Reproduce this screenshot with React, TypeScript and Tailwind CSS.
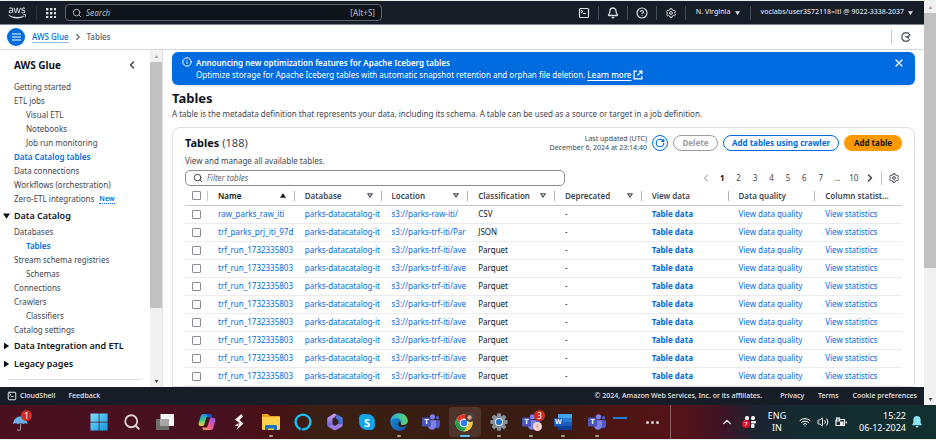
import React from "react";
import { FaAws } from "react-icons/fa";
import {
  Bell,
  CircleHelp,
  Search,
  ChevronLeft,
  ChevronRight,
  ChevronUp,
  X,
  Info,
  RotateCw,
  SquareTerminal,
  Wifi,
  Volume2,
} from "lucide-react";

type NavItem = { label: string; nested?: boolean; active?: boolean; isNew?: boolean };

const topLinks: NavItem[] = [
  { label: "Getting started" },
  { label: "ETL jobs" },
  { label: "Visual ETL", nested: true },
  { label: "Notebooks", nested: true },
  { label: "Job run monitoring", nested: true },
  { label: "Data Catalog tables", active: true },
  { label: "Data connections" },
  { label: "Workflows (orchestration)" },
  { label: "Zero-ETL integrations", isNew: true },
];

const catalogLinks: NavItem[] = [
  { label: "Databases" },
  { label: "Tables", nested: true, active: true },
  { label: "Stream schema registries" },
  { label: "Schemas", nested: true },
  { label: "Connections" },
  { label: "Crawlers" },
  { label: "Classifiers", nested: true },
  { label: "Catalog settings" },
];

const run = { name: "trf_run_1732335803", location: "s3://parks-trf-iti/ave", format: "Parquet" };
const tables = [
  { name: "raw_parks_raw_iti", location: "s3://parks-raw-iti/", format: "CSV" },
  { name: "trf_parks_prj_iti_97d", location: "s3://parks-trf-iti/Par", format: "JSON" },
  run, run, run, run, run, run, run, run,
];

const columns = [
  { label: "Name", sort: "up" },
  { label: "Database", sort: "down" },
  { label: "Location", sort: "down" },
  { label: "Classification", sort: "down" },
  { label: "Deprecated", sort: "down" },
  { label: "View data" },
  { label: "Data quality" },
  { label: "Column statist..." },
];

function Caret({ className, up = false }: { className: string; up?: boolean }) {
  return (
    <svg viewBox="0 0 8 6" className={className} fill="currentColor" aria-hidden="true">
      <path d={up ? "M4 0 8 6H0Z" : "M0 0h8L4 6Z"} />
    </svg>
  );
}

function Cog({ className }: { className: string }) {
  return (
    <svg viewBox="0 0 20 20" className={className} fill="none" stroke="currentColor" strokeWidth="2" strokeLinejoin="round" aria-hidden="true">
      <path d="M8 1.500h4l.700 2.500 1.800 1 2.500-.7 2 3.400L17.200 9.500v1L19 12.300l-2 3.400-2.500-.7-1.800 1-.700 2.500H8L7.300 16l-1.800-1-2.500.7-2-3.400 1.800-1.800v-1L1 7.700l2-3.400 2.500.7 1.800-1Z" />
      <circle cx="10" cy="10" r="2.800" />
    </svg>
  );
}

function ExternalIcon() {
  return (
    <svg viewBox="0 0 18 18" className="size-2.5" fill="none" stroke="currentColor" strokeWidth="2.200" aria-hidden="true">
      <path d="M7 2H2v14h14v-5M10.500 2H16v5.500M16 2 8 10" />
    </svg>
  );
}

function Divider({ className = "bg-[#414d5c]" }: { className?: string }) {
  return <span className={`h-3.5 w-px shrink-0 ${className}`} />;
}

function TopBar() {
  return (
    <header className="flex h-6 shrink-0 items-center border-b border-[#7d8590] bg-[#161d26] pl-2 text-[7px] font-medium text-[#dcdfe4]">
      <a href="#home" aria-label="AWS home"><FaAws className="h-4 w-[18px]" /></a>
      <span className="w-2.5" />
      <Divider className="bg-[#2a333f]" />
      <button aria-label="Services" className="ml-[9px]">
        <svg viewBox="0 0 10 10" className="size-2.5" fill="currentColor">
          {[0, 4, 8].map((y) => [0, 4, 8].map((x) => <rect key={`${x}-${y}`} x={x} y={y} width="2.4" height="2.4" />))}
        </svg>
      </button>
      <label className="ml-[9px] flex h-[17px] w-[317px] items-center rounded border border-[#5c6570] bg-[#0f141a] px-1.5">
        <Search className="size-2.5 text-[#c6c9ce]" />
        <input aria-label="Search" placeholder="Search" className="ml-1 min-w-0 flex-1 bg-transparent text-[8px] italic outline-none placeholder:text-[#a4abb3]" />
        <span className="text-[8px] text-[#a4abb3]">[Alt+S]</span>
      </label>
      <div className="ml-auto flex items-center gap-2 pr-[11px]">
        <button aria-label="CloudShell"><SquareTerminal className="size-3" strokeWidth={2.4} /></button>
        <Divider />
        <button aria-label="Notifications"><Bell className="size-3" strokeWidth={2.6} /></button>
        <Divider />
        <button aria-label="Help"><CircleHelp className="size-3" strokeWidth={2.4} /></button>
        <Divider />
        <button aria-label="Settings" className="px-px"><Cog className="size-2.5" /></button>
        <Divider />
        <button className="flex items-center gap-1 px-0.5">N. Virginia<Caret className="h-1 w-[5px]" /></button>
        <Divider />
        <button className="flex items-center gap-1 pl-0.5">voclabs/user3572118=iti @ 9022-3338-2037<Caret className="h-1 w-[5px]" /></button>
      </div>
    </header>
  );
}

function Breadcrumbs() {
  return (
    <nav aria-label="Breadcrumb" className="flex h-[25px] shrink-0 items-center border-b border-[#d5d7da] bg-white pr-[13px] pl-[7px] text-[8px] font-medium">
      <button aria-label="Open navigation" className="flex size-[18px] items-center justify-center rounded-full bg-[#006ce0] text-white">
        <svg viewBox="0 0 9 8" className="h-2 w-[9px]" stroke="currentColor" strokeWidth="1"><path d="M0 1h9M0 4h9M0 7h9" /></svg>
      </button>
      <a href="#glue" className="ml-[7px] border-b border-[#8fbdf0] leading-[10px] text-[#006ce0]">AWS Glue</a>
      <ChevronRight className="mx-1 size-2.5 text-[#656871]" strokeWidth={3} />
      <span className="text-[#5c606a]">Tables</span>
      <span className="ml-auto" />
      <Divider className="bg-[#c6c6cd]" />
      <button aria-label="Regional settings" className="ml-[9px] text-[#424650]">
        <svg viewBox="0 0 20 20" className="size-2.5" fill="none" stroke="currentColor" strokeWidth="2.200">
          <path d="M17.800 9V6L14 1.800H6L2 6v8l4 4.200h8l3.800-4.200" />
          <path d="M7.500 9.500h4.500l3-2.500v6l-3-2" fill="currentColor" strokeWidth="1.500" />
        </svg>
      </button>
    </nav>
  );
}

function NavList({ items }: { items: NavItem[] }) {
  return (
    <ul>
      {items.map((item) => (
        <li key={item.label} className={`flex h-3.5 items-center gap-[5px] ${item.nested ? "pl-[26px]" : "pl-3.5"}`}>
          <a href="#nav" className={item.active ? "font-semibold text-[#006ce0]" : "text-[#424650]"}>{item.label}</a>
          {item.isNew && <span className="border-b border-dotted border-[#006ce0] text-[7px] leading-[9px] font-semibold text-[#006ce0]">New</span>}
        </li>
      ))}
    </ul>
  );
}

function NavSection({ label, open = false }: { label: string; open?: boolean }) {
  return (
    <button className="flex h-[18px] w-full items-center text-[9px] font-semibold text-[#0f141a]">
      <span className="flex w-3.5 pl-[3px]"><Caret className={open ? "h-[6px] w-[7px]" : "h-[6px] w-[7px] -rotate-90"} /></span>
      {label}
    </button>
  );
}

function ScrollRail({ className, thumb }: { className: string; thumb: string }) {
  return (
    <div className={`flex shrink-0 flex-col items-center bg-[#f1f1f1] ${className}`} aria-hidden="true">
      <span className="flex h-3 items-center text-[#a3a3a3]"><Caret up className="h-[3px] w-[5px]" /></span>
      <span className={`w-full bg-[#c1c1c1] ${thumb}`} />
      <span className="flex-1" />
      <span className="flex h-3 items-center text-[#505050]"><Caret className="h-[3px] w-[5px]" /></span>
    </div>
  );
}

function Sidebar() {
  return (
    <aside className="flex w-[163px] shrink-0 border-r border-[#dedee3] bg-white">
      <div className="min-w-0 flex-1">
        <div className="flex h-[30px] items-center justify-between pr-3 pl-3.5">
          <h2 className="text-[10px] font-bold text-[#0f141a]">AWS Glue</h2>
          <button aria-label="Close navigation"><ChevronLeft className="size-3 text-[#424650]" strokeWidth={3} /></button>
        </div>
        <nav aria-label="AWS Glue" className="flex flex-col gap-px leading-[14px]">
          <NavList items={topLinks} />
          <div>
            <NavSection label="Data Catalog" open />
            <NavList items={catalogLinks} />
            <NavSection label="Data Integration and ETL" />
            <NavSection label="Legacy pages" />
          </div>
        </nav>
        <hr className="mx-2 mt-1.5 border-[#dedee3]" />
      </div>
      <ScrollRail className="w-3" thumb="h-[73%]" />
    </aside>
  );
}

function Banner() {
  return (
    <section className="flex h-[33px] items-start gap-1 rounded-md bg-[#006ce0] px-2.5 pt-[5px] text-white shadow-sm">
      <Info className="size-2.5" strokeWidth={2.4} />
      <div className="min-w-0 flex-1 leading-[12px]">
        <p className="font-semibold">Announcing new optimization features for Apache Iceberg tables</p>
        <p className="flex items-center">
          Optimize storage for Apache Iceberg tables with automatic snapshot retention and orphan file deletion.
          <a href="#more" className="ml-0.5 flex items-center gap-0.5 font-medium underline underline-offset-2">Learn more <ExternalIcon /></a>
        </p>
      </div>
      <button aria-label="Dismiss"><X className="size-3" strokeWidth={2.4} /></button>
    </section>
  );
}

function Pagination() {
  return (
    <nav aria-label="Pages" className="flex items-center text-[8px] text-[#424650]">
      <button aria-label="Previous page" className="flex w-4 justify-center"><ChevronLeft className="size-3 text-[#8c8c94]" /></button>
      <div className="flex w-[148px]">
        {["1", "2", "3", "4", "5", "6", "7", "...", "10"].map((page) => (
          <button key={page} className={`flex-1 basis-0 text-center ${page === "1" ? "font-bold text-[#0f141a]" : ""}`}>{page}</button>
        ))}
      </div>
      <button aria-label="Next page" className="flex w-4 justify-center"><ChevronRight className="size-3" strokeWidth={3} /></button>
      <span className="w-[3px]" />
      <Divider className="bg-[#c6c6cd]" />
      <button aria-label="Preferences" className="ml-[7px] pr-[3px]"><Cog className="size-2.5" /></button>
    </nav>
  );
}

const box = "block size-[9px] appearance-none rounded-[1px] border border-[#8c8c94] bg-white checked:bg-[#006ce0]";

function TablesGrid() {
  return (
    <table className="w-full table-fixed border-collapse text-left leading-[12px]">
      <thead>
        <tr className="h-[18px] border-b border-[#c6c6cd] text-[#424650]">
          <th className="w-[23px] pl-[7px]">
            <div className="flex items-center justify-between">
              <input type="checkbox" aria-label="Select all tables" className={box} />
              <span className="h-2.5 w-px bg-[#c6c6cd]" />
            </div>
          </th>
          {columns.map((column, i) => (
            <th key={column.label} className="pl-2.5 font-semibold">
              <div className={i === 0 ? "flex items-center text-[#0f141a]" : "flex items-center"}>
                <span className="flex-1 truncate">{column.label}</span>
                {column.sort === "up" && <Caret up className="mr-2 h-[5px] w-1.5" />}
                {column.sort === "down" && (
                  <svg viewBox="0 0 8 7" className="mr-2 h-[5px] w-1.5" fill="none" stroke="currentColor" strokeWidth="1.5"><path d="M1 1h6L4 5.5Z" /></svg>
                )}
                {i < columns.length - 1 && <span className="h-2.5 w-px bg-[#b4b4bb]" />}
              </div>
            </th>
          ))}
        </tr>
      </thead>
      <tbody className="[&_td]:overflow-hidden [&_td]:pl-2.5 [&_td]:whitespace-nowrap">
        {tables.map((table, i) => (
          <tr key={i} className="h-[18px] border-b border-[#ebebf0] text-[#006ce0]">
            <th className="pl-[7px]"><input type="checkbox" aria-label={`Select ${table.name}`} className={box} /></th>
            <td><a href="#table">{table.name}</a></td>
            <td><a href="#database">parks-datacatalog-it</a></td>
            <td><a href="#location">{table.location}</a></td>
            <td className="text-[#0f141a]">{table.format}</td>
            <td className="text-[#0f141a]">-</td>
            <td><a href="#data" className="font-bold">Table data</a></td>
            <td><a href="#quality">View data quality</a></td>
            <td><a href="#statistics">View statistics</a></td>
          </tr>
        ))}
      </tbody>
    </table>
  );
}

function TablesPage() {
  return (
    <main className="min-w-0 flex-1 overflow-hidden bg-white px-[9px] pt-0.5 text-[#424650]">
      <Banner />
      <h1 className="mt-[5px] text-[13px] leading-[17px] font-bold text-[#0f141a]">Tables</h1>
      <p className="leading-[14px]">A table is the metadata definition that represents your data, including its schema. A table can be used as a source or target in a job definition.</p>
      <section className="mt-1.5 rounded-t-lg border border-[#dedee3] px-3 pt-1.5">
        <div className="flex items-center gap-[5px]">
          <h2 className="flex-1 text-[11px] leading-[18px] font-bold text-[#0f141a]">Tables <span className="font-normal text-[#424650]">(188)</span></h2>
          <p className="text-right text-[7px] leading-[9px]">Last updated (UTC)<br />December 6, 2024 at 23:14:40</p>
          <button aria-label="Refresh" className="flex size-4 items-center justify-center rounded-full border border-[#006ce0] text-[#006ce0]"><RotateCw className="size-2.5" strokeWidth={2.8} /></button>
          <button className="h-4 w-[45px] rounded-full border border-[#9b9ba5] font-bold text-[#9b9ba5]">Delete</button>
          <button className="h-4 w-[116px] rounded-full border border-[#006ce0] font-bold text-[#006ce0]">Add tables using crawler</button>
          <button className="h-4 w-[58px] rounded-full bg-[#ff9900] font-bold text-[#0f141a]">Add table</button>
        </div>
        <p className="mt-[3px] leading-[12px]">View and manage all available tables.</p>
        <div className="mt-[3px] flex items-center justify-between">
          <label className="flex h-4 w-[380px] items-center rounded-[5px] border border-[#8c8c94] px-[7px]">
            <Search className="size-2.5" strokeWidth={2.4} />
            <input aria-label="Filter tables" placeholder="Filter tables" className="ml-1 min-w-0 flex-1 italic outline-none placeholder:text-[#656871]" />
          </label>
          <Pagination />
        </div>
        <div className="pt-px"><TablesGrid /></div>
      </section>
    </main>
  );
}

function Footer() {
  return (
    <footer className="flex h-[18px] shrink-0 items-center bg-[#161d26] px-[7px] text-[7px] font-medium text-[#e6e8eb]">
      <button className="flex items-center gap-[3px]"><SquareTerminal className="size-2.5" strokeWidth={2.4} />CloudShell</button>
      <button className="ml-[13px]">Feedback</button>
      <p className="ml-auto">© 2024, Amazon Web Services, Inc. or its affiliates.</p>
      <a href="#privacy" className="ml-[18px]">Privacy</a>
      <a href="#terms" className="ml-3.5">Terms</a>
      <a href="#cookies" className="ml-3.5">Cookie preferences</a>
    </footer>
  );
}

function WindowsIcon() {
  return (
    <svg viewBox="0 0 18 18" className="size-[18px]">
      <defs><linearGradient id="win" x1="0" y1="0" x2="1" y2="1"><stop stopColor="#7fe0fb" /><stop offset="1" stopColor="#0f95e4" /></linearGradient></defs>
      <path fill="url(#win)" d="M.5.5h8.2v8.2H.5ZM9.4.5h8.2v8.2H9.4ZM.5 9.4h8.2v8.2H.5ZM9.4 9.4h8.2v8.2H9.4Z" />
    </svg>
  );
}

function TaskViewIcon() {
  return (
    <svg viewBox="0 0 18 18" className="size-[18px]">
      <path fill="#6f6f70" d="M0 6h13v11H0Z" />
      <path fill="#f4f4f4" d="M4.500 1H18v12H4.500Z" />
      <path fill="#a9a5a6" d="M4.500 6H13v7H4.500Z" />
    </svg>
  );
}

function CopilotIcon() {
  return (
    <svg viewBox="0 0 18 18" className="size-[18px]">
      <defs>
        <linearGradient id="copA" x1="0" y1="0" x2="0" y2="1"><stop stopColor="#1c8cf0" /><stop offset=".5" stopColor="#3cc78a" /><stop offset="1" stopColor="#f4d33b" /></linearGradient>
        <linearGradient id="copB" x1="1" y1="0" x2="0" y2="1"><stop stopColor="#8b5cf0" /><stop offset=".5" stopColor="#e8569f" /><stop offset="1" stopColor="#fba24a" /></linearGradient>
      </defs>
      <path fill="url(#copA)" d="M5 1h6.500c1.500 0 2 1 2.300 2.500H10c-1 0-1.500.7-1.800 1.800L6.500 11c-.4 1.300-1 2-2.300 2H2.500C.8 13 .2 11.800.7 10L2.600 3.500C3 2 3.600 1 5 1Z" />
      <path fill="#1652c4" d="M8.500 1h3c1.600 0 2.100 1 2.500 2.600L14.400 5H11Z" />
      <path fill="url(#copB)" d="M13 17H6.500c-1.500 0-2-1-2.300-2.500H8c1 0 1.500-.7 1.800-1.800L11.500 7c.4-1.300 1-2 2.300-2h1.700c1.700 0 2.300 1.200 1.800 3l-1.900 6.500c-.4 1.500-1 2.500-2.400 2.500Z" />
    </svg>
  );
}

function BoltIcon() {
  return (
    <svg viewBox="0 0 12 18" className="h-[18px] w-3">
      <path fill="#f5f0f0" d="M8.500 1 2 6.500l4.500 3.500L3.500 17 10.500 10.500 6.500 7 10 3.500Z" />
      <path fill="#f5f0f0" d="M1.500 12.500 6 10l-2.500 7L5 13Z" />
    </svg>
  );
}

function FolderIcon() {
  return (
    <svg viewBox="0 0 18 16" className="h-4 w-[18px]">
      <path fill="#e8a317" d="M0 1.200C0 .5.5 0 1.200 0H6l2 2h8.800c.7 0 1.200.5 1.200 1.200V6H0Z" />
      <path fill="#ffd04c" d="M0 3h18v11.800c0 .7-.5 1.200-1.200 1.200H1.200C.5 16 0 15.500 0 14.800Z" />
      <path fill="#1674c6" d="M3 16v-3.500c0-1 .6-1.500 1.500-1.500h9c.9 0 1.500.5 1.500 1.500V16h-3v-1.500H6V16Z" />
    </svg>
  );
}

function AlexaIcon() {
  return (
    <svg viewBox="0 0 18 18" className="size-[18px]" fill="none">
      <circle cx="9" cy="9" r="7.400" stroke="#12c4f2" strokeWidth="2.400" />
      <path d="M7.500 14.500v3.500" stroke="#3f1a14" strokeWidth="1.200" />
    </svg>
  );
}

function M365Icon() {
  return (
    <svg viewBox="0 0 18 18" className="size-[18px]">
      <defs>
        <linearGradient id="officeA" x1="0" y1="0" x2="0" y2="1"><stop stopColor="#d9a4f2" /><stop offset="1" stopColor="#5a5fd8" /></linearGradient>
        <linearGradient id="officeB" x1="1" y1="0" x2="0" y2="1"><stop stopColor="#5b8be6" /><stop offset="1" stopColor="#2b54c4" /></linearGradient>
      </defs>
      <path fill="url(#officeA)" d="M9.500.7C11 2.500 9 4 6.500 5.800v5.400L1.800 13.800c-.4-.5-.6-1.100-.6-1.800V6.200c0-1 .4-1.700 1.300-2.200L7 1.200c.9-.5 1.700-.6 2.500-.5Z" />
      <path fill="url(#officeB)" d="M9.500.7 15.500 4c.9.5 1.300 1.200 1.300 2.200v5.300l-4.600-.7V7L9 5C10.500 3.800 11 2.500 9.500.7Z" />
      <path fill="#9a7be8" d="M16.800 11.300c0 1.300-.3 2-1.300 2.600l-5 2.900c-1 .5-2 .5-3 0l-5-2.800-.7-.7 4.700-2.100L9 13l3.200-2.200Z" />
    </svg>
  );
}

function SkypeIcon() {
  return (
    <span className="relative flex size-4 items-center justify-center rounded-full bg-[#12a5e8] text-[11px] leading-none font-bold text-white">
      <svg viewBox="0 0 16 16" className="absolute inset-0 size-4" fill="#12a5e8"><circle cx="4.500" cy="4.500" r="4.500" /><circle cx="11.500" cy="11.500" r="4.500" /></svg>
      <span className="relative">S</span>
    </span>
  );
}

function EdgeIcon() {
  return (
    <svg viewBox="0 0 18 18" className="size-[18px]">
      <defs>
        <linearGradient id="edgeA" x1="0" y1="0" x2="1" y2="0"><stop stopColor="#23a9e8" /><stop offset="1" stopColor="#63d764" /></linearGradient>
        <linearGradient id="edgeB" x1="0" y1="0" x2="1" y2="1"><stop stopColor="#1b8fdd" /><stop offset="1" stopColor="#0c57a8" /></linearGradient>
      </defs>
      <circle cx="9" cy="9" r="8.700" fill="url(#edgeB)" />
      <path fill="url(#edgeA)" d="M.4 8C1 3.500 4.600.3 9 .3c5 0 8.700 3.500 8.700 7.400 0 2.600-2 4.300-4.600 4.300-1.800 0-2.800-.7-2.200-1.600.6-.9.500-1.600.2-2.300C10.200 6.300 8.500 5.200 6 5.200 3.500 5.200 1.500 6.300.4 8Z" />
      <path fill="#3b1c12" d="M10.900 10.400c-.6.900.4 1.600 2.200 1.600 1.800 0 3.400-.6 4.300-2 .4 2-2 4-5.700 4-3 0-4.400-2.600-2.700-5.500.8.200 1.900.8 1.900 1.900Z" />
    </svg>
  );
}

function TeamsIcon() {
  return (
    <span className="relative block h-4 w-[18px]">
      <svg viewBox="0 0 18 16" className="absolute inset-0 h-4 w-[18px]">
        <circle cx="10.500" cy="2.800" r="2.600" fill="#7b83eb" />
        <circle cx="15.500" cy="3.800" r="1.700" fill="#5059c9" />
        <path fill="#5059c9" d="M12 6.200h5.200c.5 0 .8.3.8.8v4c0 2-1.300 3.300-3 3.300S12 13 12 11Z" />
        <path fill="#7b83eb" d="M6 6.200h8v5.300c0 2.500-1.600 4.300-4 4.300s-4-1.800-4-4.300Z" />
        <rect x="0" y="3.500" width="9" height="9" rx="1" fill="#4b53bc" />
      </svg>
      <span className="absolute top-[4px] left-0 w-[9px] text-center text-[7px] leading-[8px] font-bold text-white">T</span>
    </span>
  );
}

function ChromeIcon() {
  return (
    <svg viewBox="0 0 20 20" className="size-5">
      <circle cx="9" cy="11" r="8.500" fill="#fff" />
      <path fill="#e5372c" d="M1.600 6.800A8.500 8.500 0 0 1 16.400 6.800H9a4.200 4.200 0 0 0-3.700 2.200L5 12Z" />
      <path fill="#fcc934" d="M16.400 6.800A8.500 8.500 0 0 1 9 19.500l3.700-6.400A4.200 4.200 0 0 0 12 7.500V6.800Z" />
      <path fill="#1e9e4a" d="M1.600 6.800A8.500 8.500 0 0 0 9 19.500l3.700-6.400a4.200 4.200 0 0 1-7.400 0Z" />
      <circle cx="9" cy="11" r="4.200" fill="#fff" />
      <circle cx="9" cy="11" r="3.300" fill="#2f7df0" />
      <circle cx="15" cy="5" r="5" fill="#4b3f3c" />
      <circle cx="14.500" cy="5.500" r="2.200" fill="#d2a892" />
    </svg>
  );
}

function GearIcon() {
  return (
    <svg viewBox="0 0 18 18" className="size-[18px]">
      <g fill="#87909a">
        {[0, 45, 90, 135].map((a) => <rect key={a} x="7" y=".3" width="4" height="17.400" rx="1" transform={`rotate(${a} 9 9)`} />)}
        <circle cx="9" cy="9" r="6.600" />
      </g>
      <circle cx="9" cy="9" r="4" fill="#e9eef2" />
      <circle cx="9" cy="9" r="3" fill="#1a73c4" />
    </svg>
  );
}

function WordIcon() {
  return (
    <span className="relative block h-4 w-[18px]">
      <svg viewBox="0 0 18 16" className="absolute inset-0 h-4 w-[18px]">
        <path fill="#41a5ee" d="M4 1c0-.6.400-1 1-1h12c.6 0 1 .4 1 1v3H4Z" />
        <path fill="#2b7cd3" d="M4 4h14v4H4Z" /><path fill="#185abd" d="M4 8h14v4H4Z" />
        <path fill="#103f91" d="M4 12h14v3c0 .6-.4 1-1 1H5c-.6 0-1-.4-1-1Z" />
        <rect x="0" y="4" width="9" height="8.500" rx="1" fill="#185abd" />
      </svg>
      <span className="absolute top-[4px] left-0 w-[9px] text-center text-[7px] leading-[8px] font-bold text-white">W</span>
    </span>
  );
}

function TaskButton({ label, running, active, children }: { label: string; running?: boolean; active?: boolean; children: React.ReactNode }) {
  return (
    <button aria-label={label} className={`relative flex h-[30px] flex-1 items-center justify-center rounded ${active ? "mx-0.5 bg-white/10" : ""}`}>
      {children}
      {running && <span className={`absolute bottom-0 h-0.5 rounded-full ${active ? "w-2.5 bg-[#5cc3f5]" : "w-1 bg-[#a39b98]"}`} />}
    </button>
  );
}

function Taskbar() {
  return (
    <div className="flex h-[34px] shrink-0 items-center bg-[linear-gradient(90deg,#4b1020_0%,#471120_24%,#4a1016_29%,#3a1f13_34%,#3a1c12_58%,#4e1513_66%,#55131a_73%,#3f1425_77%,#1c2431_81%,#142b31_86%,#12302e_100%)] text-white">
      <button aria-label="Weather" className="relative ml-[11px] size-5">
        <svg viewBox="0 0 20 20" className="size-5">
          <path fill="#69b4ee" d="M2 12C2.500 7 6 4.500 9.500 4.500S16 7 16.500 12c-1.500-1-3-1-4 0-1.500-1-4-1-5.500 0-1.500-1-3.500-1-5 0Z" />
          <path d="M9.500 11.500V17c0 2-3 2-3 0" fill="none" stroke="#8d8a94" strokeWidth="1.200" />
        </svg>
        <span className="absolute -top-0.5 left-2.5 flex size-[11px] items-center justify-center rounded-full bg-[#cf2c24] text-[8px] leading-none">1</span>
      </button>
      <div className="ml-[51px] flex w-[99px]">
        <TaskButton label="Start"><WindowsIcon /></TaskButton>
        <TaskButton label="Search"><Search className="size-[18px] text-[#dcd5d8]" strokeWidth={2.4} /></TaskButton>
        <TaskButton label="Task view"><TaskViewIcon /></TaskButton>
      </div>
      <div className="ml-2.5 flex w-[388px]">
        <TaskButton label="Copilot"><CopilotIcon /></TaskButton>
        <TaskButton label="Shortcut"><BoltIcon /></TaskButton>
        <TaskButton label="File Explorer" running><FolderIcon /></TaskButton>
        <TaskButton label="Alexa"><AlexaIcon /></TaskButton>
        <TaskButton label="Microsoft 365"><M365Icon /></TaskButton>
        <TaskButton label="Skype"><SkypeIcon /></TaskButton>
        <TaskButton label="Edge" running><EdgeIcon /></TaskButton>
        <TaskButton label="Teams"><TeamsIcon /></TaskButton>
        <TaskButton label="Chrome" running active><ChromeIcon /></TaskButton>
        <TaskButton label="Settings" running><GearIcon /></TaskButton>
        <TaskButton label="Teams chat" running>
          <TeamsIcon />
          <span className="absolute top-[3px] right-0.5 flex size-[11px] items-center justify-center rounded-full bg-[#cf2c24] text-[8px] leading-none">3</span>
          <span className="absolute right-[5px] bottom-[6px] flex size-[9px] items-center justify-center rounded-full bg-[#f3d3d3] text-[5px] leading-none text-[#a33]">i</span>
        </TaskButton>
        <TaskButton label="Word" running><WordIcon /></TaskButton>
      </div>
      <div className="ml-0.5 flex w-8"><TaskButton label="Teams meeting" running><TeamsIcon /></TaskButton></div>
      <span className="mb-2 h-0.5 w-3.5 bg-[#1d7fd6]" />
      <button aria-label="More" className="ml-[19px] flex gap-0.5">
        {[0, 1, 2].map((d) => <span key={d} className="size-[3px] rounded-full bg-[#ddd3d3]" />)}
      </button>
      <span className="ml-[11px] h-full w-px bg-[#8a6266]" />
      <div className="ml-auto flex items-center pr-3.5">
        <button aria-label="Hidden icons"><ChevronUp className="size-3.5 text-[#d9d5da]" /></button>
        <button aria-label="Slack" className="relative ml-2.5 size-3">
          <svg viewBox="0 0 12 12" className="size-3" fill="#f0eff2">
            <rect x="1" y="0" width="4" height="4" rx="1.500" /><rect x="7" y="0" width="4" height="4" rx="1.500" /><rect x="7" y="5" width="5" height="2.400" rx="1" /><rect x="7" y="8" width="3.500" height="4" rx="1" />
          </svg>
          <span className="absolute top-1 -left-0.5 flex size-2 items-center justify-center rounded-full bg-[#d8152d] text-[6px] leading-none">7</span>
        </button>
        <button className="ml-[11px] w-5 text-center text-[9px] leading-[12px] font-normal">ENG<br />IN</button>
        <Wifi className="ml-3 size-3" />
        <Volume2 className="ml-1.5 size-3" />
        <svg viewBox="0 0 12 10" className="ml-1.5 h-2.5 w-3" fill="none" stroke="#f2f4f4" strokeWidth="1.200">
          <path d="M1 3v5.500h8.500v-6H5M11.300 4.500v2" /><path d="M5 4.500h3.500V8L5 8Z" fill="#f2f4f4" stroke="none" /><path d="M2 0v2M4 0v2M1.500 2h3v2h-3Z" />
        </svg>
        <p className="ml-3 text-right text-[9px] leading-[12px]">15:22<br />06-12-2024</p>
        <svg viewBox="0 0 10 12" className="ml-1.5 h-3 w-2.5" fill="#8be3f8">
          <path d="M5 0c2.300 0 3.600 1.700 3.600 3.800v2.700L10 9.300H0l1.400-2.800V3.800C1.400 1.700 2.700 0 5 0ZM3.500 10h3c-.3 1.200-.8 1.700-1.500 1.700S3.800 11.200 3.500 10Z" />
        </svg>
      </div>
    </div>
  );
}

export default function App() {
  return (
    <div className="flex h-screen flex-col overflow-hidden bg-[#e6efe9] py-px font-['Noto_Sans','Open_Sans',sans-serif] text-[8px]">
      <div className="flex min-h-0 flex-1">
        <div className="flex min-w-0 flex-1 flex-col">
          <TopBar />
          <Breadcrumbs />
          <div className="flex min-h-0 flex-1">
            <Sidebar />
            <TablesPage />
          </div>
          <Footer />
        </div>
        <ScrollRail className="w-3" thumb="h-[63%]" />
      </div>
      <Taskbar />
    </div>
  );
}
